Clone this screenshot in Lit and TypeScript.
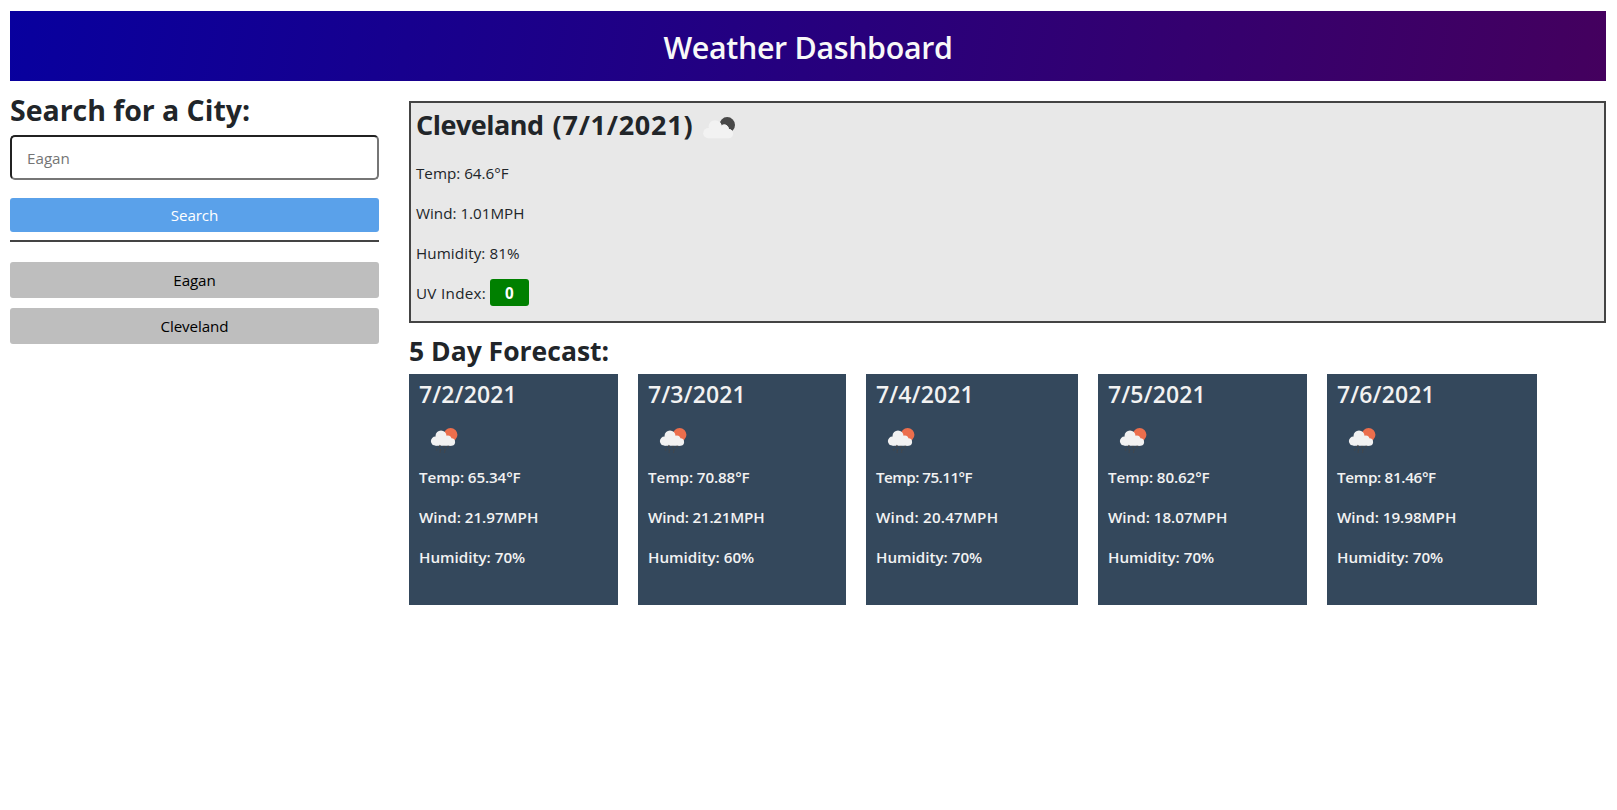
import { LitElement, html, css, svg } from "lit";
import { customElement } from "lit/decorators.js";

interface Day { date: string; temp: string; wind: string; humidity: string }

const DAYS: Day[] = [
  { date: "7/2/2021", temp: "65.34", wind: "21.97", humidity: "70" },
  { date: "7/3/2021", temp: "70.88", wind: "21.21", humidity: "60" },
  { date: "7/4/2021", temp: "75.11", wind: "20.47", humidity: "70" },
  { date: "7/5/2021", temp: "80.62", wind: "18.07", humidity: "70" },
  { date: "7/6/2021", temp: "81.46", wind: "19.98", humidity: "70" },
];

// Readings that hold the narrow digit 1 are set a little tighter.
const tracking = (base: number, value: string) =>
  `letter-spacing:${(base - 0.21 * (value.split("1").length - 1)).toFixed(2)}px`;

const rainIcon = svg`<svg class="rain" viewBox="0 0 50 50" width="50" height="50">
  <circle cx="31.6" cy="19.8" r="6.8" fill="#ec6e4c"/>
  <g fill="#f2f2f2">
    <circle cx="22" cy="21" r="5.5"/>
    <circle cx="16.4" cy="26.1" r="4.5"/>
    <circle cx="28.8" cy="24.2" r="3.6"/>
    <circle cx="32.4" cy="27" r="3.7"/>
    <path d="M16.4 24H31L32.4 30.7H16.4z"/>
  </g>
  <path d="M21.2 30l-1.2 2.8M25.4 31l-.9 2M29.4 30.8l-.9 2M18.2 33.8l-.8 1.7M22 34l-1 2M26.6 34l-1 2M21.4 36.6l-.5 1.1M25.9 36.6l-.5 1.1" stroke="#454648" stroke-width="1.1" fill="none"/>
</svg>`;

const cloudShape = () => svg`
  <circle cx="12" cy="9.6" r="6.4"/>
  <circle cx="5.3" cy="16.2" r="5.1"/>
  <circle cx="21.3" cy="12" r="4.2"/>
  <circle cx="25.6" cy="16.8" r="4.5"/>
  <path d="M5.3 12.5H24.5L25.6 21.3H5.3z"/>`;

const cloudyNightIcon = svg`<svg class="night" viewBox="0 0 33 22" width="33" height="22">
  <circle cx="24.2" cy="7.9" r="7.8" fill="#484848"/>
  <g fill="#e8e8e8" stroke="#e8e8e8" stroke-width="1">${cloudShape()}</g>
  <g fill="#f2f2f2">${cloudShape()}</g>
</svg>`;

@customElement("app-root")
export class AppRoot extends LitElement {
  static styles = css`
    :host { display: block; box-sizing: border-box; min-height: 810px; padding: 11px 11px 0 10px; background: #fff; color: #212529; font: 400 15.2px/24px "Open Sans", "Noto Sans", sans-serif; }
    * { box-sizing: border-box; }
    h1, h2, h3, p { margin: 0; }
    header { height: 70px; padding-top: 1px; text-align: center; background: linear-gradient(100deg, #08009e, #44005e); }
    h1 { font-size: 30.4px; line-height: 71px; font-weight: 600; letter-spacing: -0.34px; color: #f8f8f8; }
    main { display: grid; grid-template-columns: 369px 1fr; gap: 30px; }
    aside { padding-top: 11px; display: flex; flex-direction: column; }
    .search-title { font-size: 28.5px; line-height: 36px; letter-spacing: -0.04px; margin-bottom: 7px; }
    input { height: 45px; padding: 0 15px; border: 2px inset #767676; border-radius: 5px; background: #fff; font: inherit; }
    input::placeholder { color: #757575; opacity: 1; }
    button { display: block; width: 100%; padding: 0; border: 0; border-radius: 3px; font: inherit; line-height: 22px; letter-spacing: -0.1px; }
    .go { height: 34px; margin: 18px 0 8px; background: #5aa1ea; color: #fff; }
    .history { border-top: 2px solid #444; padding-top: 20px; display: grid; gap: 10px; }
    .city { height: 36px; background: #bebebe; color: #000; }
    .today { margin-top: 20px; height: 222px; padding: 1px 5px 0; border: 2px solid #444; background: #e8e8e8; }
    .today-title { display: flex; font-size: 27px; line-height: 42px; margin-bottom: 15px; }
    .city-name { letter-spacing: -0.5px; margin-right: 9px; }
    .city-date { letter-spacing: 0.75px; }
    .night { margin: 13px 0 0 10px; }
    p + p { margin-top: 16px; }
    .t3 { letter-spacing: 0.1px; }
    .uv { display: flex; height: 24px; letter-spacing: 0.3px; }
    .badge { margin: -2px 0 0 4px; width: 39px; height: 27px; line-height: 28px; border-radius: 3px; background: green; color: #fff; font-weight: 700; text-align: center; }
    .five { font-size: 26.5px; line-height: 36px; margin: 10px 0 5px; }
    .days { display: grid; grid-template-columns: 209px 208px 212px 209px 210px; gap: 20px; }
    .day { height: 231px; padding: 5px 10px 0; background: #34485c; color: #f2f2f2; font-weight: 600; }
    .date { font-size: 23px; line-height: 30px; font-weight: 600; letter-spacing: 0.1px; }
    .rain { display: block; margin: 6px 0 0; }
  `;
  render() {
    return html`
      <header><h1>Weather Dashboard</h1></header>
      <main>
        <aside>
          <h2 class="search-title">Search for a City:</h2>
          <input type="text" placeholder="Eagan">
          <button class="go">Search</button>
          <div class="history">
            <button class="city">Eagan</button>
            <button class="city">Cleveland</button>
          </div>
        </aside>
        <div>
          <section class="today">
            <h2 class="today-title"><span class="city-name">Cleveland</span> <span class="city-date">(7/1/2021)</span>${cloudyNightIcon}</h2>
            <p>Temp: 64.6°F</p>
            <p>Wind: 1.01MPH</p>
            <p class="t3">Humidity: 81%</p>
            <p class="uv"><span>UV Index:</span><span class="badge">0</span></p>
          </section>
          <h2 class="five">5 Day Forecast:</h2>
          <section class="days">
            ${DAYS.map((d) => html`<article class="day">
              <h3 class="date">${d.date}</h3>
              ${rainIcon}
              <p style=${tracking(-0.1, d.temp)}>Temp: ${d.temp}°F</p>
              <p style=${tracking(0.2, d.wind)}>Wind: ${d.wind}MPH</p>
              <p>Humidity: ${d.humidity}%</p>
            </article>`)}
          </section>
        </div>
      </main>`;
  }
}
